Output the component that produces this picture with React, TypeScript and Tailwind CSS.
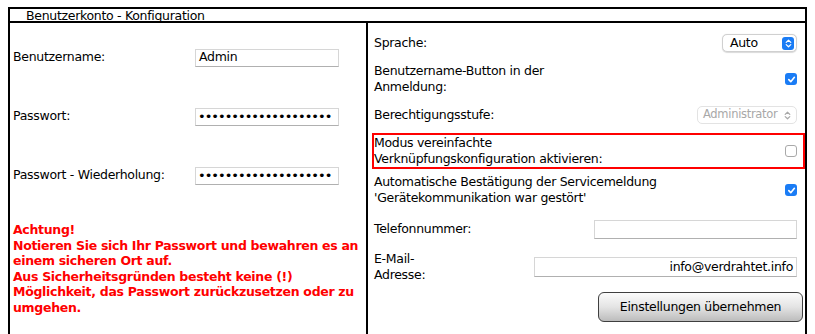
import React from "react";

const Check = ({ on }: { on: boolean }) =>
  on ? (
    <div className="w-[12px] h-[12px] rounded-[3px] bg-[#1a7cf5] flex items-center justify-center">
      <svg width="9" height="9" viewBox="0 0 10 10">
        <path d="M2 5.2 L4.2 7.4 L8.2 2.6" fill="none" stroke="white" strokeWidth="1.8" strokeLinecap="round" strokeLinejoin="round" />
      </svg>
    </div>
  ) : (
    <div className="w-[12px] h-[12px] rounded-[3px] bg-white border border-[#a9a9a9]" />
  );

const Stepper = ({ color }: { color: string }) => (
  <svg width="7" height="9" viewBox="0 0 7 9" className="shrink-0">
    <path d="M1.2 3.4 L3.5 1.2 L5.8 3.4 M1.2 5.6 L3.5 7.8 L5.8 5.6" fill="none" stroke={color} strokeWidth="1.2" strokeLinecap="round" strokeLinejoin="round" />
  </svg>
);

const Dots = () => (
  <div className="w-[144px] h-[18px] bg-white border border-[#d6d6d6] border-b-[#b0b0b0] flex items-center pl-[2px]">
    <span className="text-[13px] tracking-[-1px] leading-none whitespace-nowrap">{"••••••••••••••••••••"}</span>
  </div>
);

export default function App() {
  return (
    <div className="w-[815px] h-[334px] overflow-hidden bg-white font-['DejaVu_Sans','Liberation_Sans',sans-serif] text-[12.5px] tracking-[-0.3px] text-black">
      <div className="ml-[8px] mt-[7px] w-[799px] border-2 border-b-0 border-black">
        <div className="h-[14px] border-b-2 border-black pl-[16px] leading-[14px]">
          Benutzerkonto - Konfiguration
        </div>
        <div className="flex">
          {/* Left column */}
          <div className="w-[358px] border-r-2 border-black pl-[3px] pt-[5px] h-[320px]">
            <div className="h-[59px] flex items-center">
              <div className="w-[182px]">Benutzername:</div>
              <div className="w-[144px] h-[18px] bg-white border border-[#d6d6d6] border-b-[#b0b0b0] flex items-center pl-[3px] leading-none">
                Admin
              </div>
            </div>
            <div className="h-[59px] flex items-center">
              <div className="w-[182px]">Passwort:</div>
              <Dots />
            </div>
            <div className="h-[59px] flex items-center">
              <div className="w-[182px]">Passwort - Wiederholung:</div>
              <Dots />
            </div>
            <div className="mt-[17px] text-[#ff0000] font-bold leading-[15.6px] whitespace-nowrap">
              Achtung!
              <br />
              Notieren Sie sich Ihr Passwort und bewahren es an
              <br />
              einem sicheren Ort auf.
              <br />
              Aus Sicherheitsgründen besteht keine (!)
              <br />
              Möglichkeit, das Passwort zurückzusetzen oder zu
              <br />
              umgehen.
            </div>
          </div>
          {/* Right column */}
          <div className="flex-1 pl-[4px] pt-[2px] leading-[16px]">
            <div className="h-[36px] flex items-center justify-between pl-[2px] pr-[8px]">
              <div>Sprache:</div>
              <div className="w-[75px] h-[18px] rounded-[5px] border border-[#d0d0d0] bg-white flex items-center justify-between pl-[7px] pr-[2px] shadow-[0_0.5px_1px_rgba(0,0,0,0.15)]">
                <span className="leading-none">Auto</span>
                <div className="w-[12px] h-[13px] rounded-[3px] bg-[#1a7cf5] flex items-center justify-center">
                  <Stepper color="white" />
                </div>
              </div>
            </div>
            <div className="h-[36px] flex items-center justify-between pl-[2px] pr-[8px]">
              <div>
                Benutzername-Button in der
                <br />
                Anmeldung:
              </div>
              <Check on />
            </div>
            <div className="h-[36px] flex items-center justify-between pl-[2px] pr-[8px]">
              <div>Berechtigungsstufe:</div>
              <div className="w-[100px] h-[18px] rounded-[5px] border border-[#e3e3e3] bg-white flex items-center justify-between pl-[5px] pr-[5px] text-[#a8a8a8]">
                <span className="leading-none text-[11.5px] tracking-[-0.3px] whitespace-nowrap">Administrator</span>
                <Stepper color="#a8a8a8" />
              </div>
            </div>
            <div className="h-[36px] flex items-center justify-between border-2 border-[#ff0000] pr-[6px]">
              <div>
                Modus vereinfachte
                <br />
                Verknüpfungskonfiguration aktivieren:
              </div>
              <Check on={false} />
            </div>
            <div className="h-[42px] flex items-center justify-between pl-[2px] pr-[8px]">
              <div>
                Automatische Bestätigung der Servicemeldung
                <br />
                'Gerätekommunikation war gestört'
              </div>
              <Check on />
            </div>
            <div className="h-[36px] flex items-center justify-between pl-[2px] pr-[8px]">
              <div>Telefonnummer:</div>
              <div className="w-[203px] h-[19px] bg-white border border-[#d6d6d6] border-b-[#b0b0b0]" />
            </div>
            <div className="h-[40px] flex items-center justify-between pl-[2px] pr-[8px]">
              <div>
                E-Mail-
                <br />
                Adresse:
              </div>
              <div className="w-[263px] h-[20px] bg-white border border-[#d6d6d6] border-b-[#b0b0b0] flex items-center justify-end pr-[3px] leading-none">
                info@verdrahtet.info
              </div>
            </div>
            <div className="h-[40px] flex items-center justify-end pr-[2px]">
              <button className="w-[205px] h-[30px] rounded-[6px] border border-[#3f3f3f] bg-gradient-to-b from-[#fbfbfb] via-[#e4e4e4] to-[#bcbcbc] leading-none">
                Einstellungen übernehmen
              </button>
            </div>
          </div>
        </div>
      </div>
    </div>
  );
}
